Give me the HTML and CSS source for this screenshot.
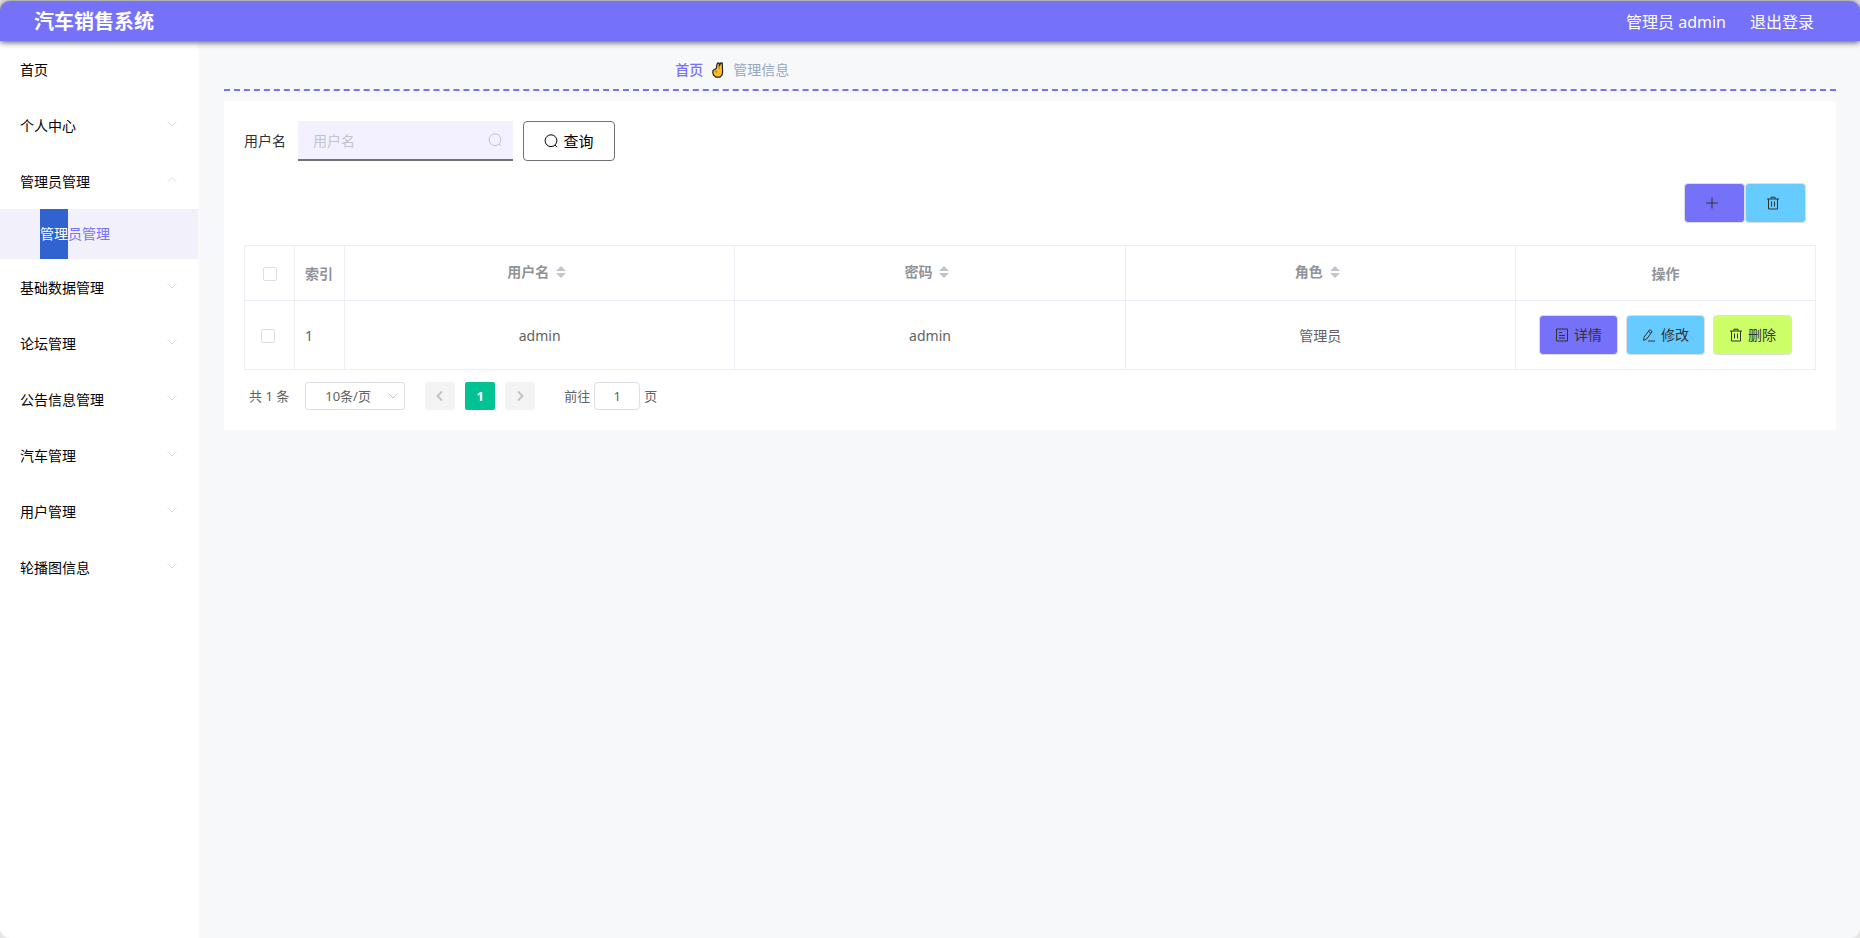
FILE: index.html
```html
<!DOCTYPE html>
<html lang="zh-CN">
<head>
<meta charset="utf-8">
<title>汽车销售系统</title>
<link rel="stylesheet" href="styles.css">
</head>
<body>
<svg class="sprite" aria-hidden="true">
  <symbol id="down" viewBox="0 0 12 12"><path d="M1.5 3.5 6 8l4.500-4.500"/></symbol>
  <symbol id="up" viewBox="0 0 12 12"><path d="M1.500 8 6 3.500 10.500 8"/></symbol>
  <symbol id="search" viewBox="0 0 14 14"><circle cx="7" cy="6.700" r="5.900"/><path d="m11 11 2.200 2.200"/></symbol>
  <symbol id="plus" viewBox="0 0 14 14"><path d="M7 1.500v11M1.500 7h11"/></symbol>
  <symbol id="trash" viewBox="0 0 14 14"><path d="M1 3h12M2.500 3v10h9V3M5 3V1.200h4V3M5.500 5.500v5M8.500 5.500v5"/></symbol>
  <symbol id="doc" viewBox="0 0 14 14"><path d="M1.500 1h11v12h-11zM4 4.500h3M4 7.500h6M4 10h6"/></symbol>
  <symbol id="edit" viewBox="0 0 14 14"><path d="m2 9.300 5.700-7.600 2.500 1.900-5.700 7.600-2.800 1.200zM6.500 3.400 9 5.300M6 13h7"/></symbol>
</svg>
<div class="app">
  <header class="header">
    <h1 class="title">汽车销售系统</h1>
    <div class="account"><span>管理员 admin</span><a class="logout" href="#">退出登录</a></div>
  </header>
  <div class="body">
    <nav class="sidebar">
      <a class="item" href="#">首页</a>
      <button class="item" type="button">个人中心<svg class="arrow"><use href="#down"/></svg></button>
      <button class="item" type="button" aria-expanded="true">管理员管理<svg class="arrow"><use href="#up"/></svg></button>
      <a class="subitem" href="#"><span class="selected">管理</span><span>员管理</span></a>
      <button class="item" type="button">基础数据管理<svg class="arrow"><use href="#down"/></svg></button>
      <button class="item" type="button">论坛管理<svg class="arrow"><use href="#down"/></svg></button>
      <button class="item" type="button">公告信息管理<svg class="arrow"><use href="#down"/></svg></button>
      <button class="item" type="button">汽车管理<svg class="arrow"><use href="#down"/></svg></button>
      <button class="item" type="button">用户管理<svg class="arrow"><use href="#down"/></svg></button>
      <button class="item" type="button">轮播图信息<svg class="arrow"><use href="#down"/></svg></button>
    </nav>
    <main class="main">
      <div class="crumbs">
        <a class="home" href="#">首页</a>
        <svg class="hand" viewBox="0 0 12 16" aria-hidden="true"><path d="M1 8.500 4.300 6.500 5 2.200 6 .8l1.300.6V4L8.800.8l1.500.4.300 9-.6 3-2 2H4L1.500 13 .8 10.500z" fill="#fdbf2d" stroke="#222" stroke-width="1.200" stroke-linejoin="round"/><path d="m2.500 9 2.500.5-1 1.500M7.300 4v3.500" fill="none" stroke="#b86d00" stroke-width=".8"/></svg>
        <span>管理信息</span>
      </div>
      <section class="card">
        <form class="search">
          <label for="username">用户名</label>
          <div class="field"><input id="username" type="text" placeholder="用户名"><svg class="icon"><use href="#search"/></svg></div>
          <button class="query" type="button"><svg class="icon"><use href="#search"/></svg>查询</button>
        </form>
        <div class="tools">
          <button class="btn tool purple" type="button" aria-label="新增"><svg class="icon"><use href="#plus"/></svg></button>
          <button class="btn tool blue" type="button" aria-label="删除"><svg class="icon"><use href="#trash"/></svg></button>
        </div>
        <table class="table">
          <colgroup><col class="narrow"><col class="narrow"><col><col><col><col class="ops"></colgroup>
          <thead>
            <tr>
              <th class="check"><input type="checkbox" aria-label="全选"></th>
              <th class="index">索引</th>
              <th><span class="sortable">用户名<svg class="sort" viewBox="0 0 10 12"><path d="M0 5 5 0l5 5zM0 7h10l-5 5z"/></svg></span></th>
              <th><span class="sortable">密码<svg class="sort" viewBox="0 0 10 12"><path d="M0 5 5 0l5 5zM0 7h10l-5 5z"/></svg></span></th>
              <th><span class="sortable">角色<svg class="sort" viewBox="0 0 10 12"><path d="M0 5 5 0l5 5zM0 7h10l-5 5z"/></svg></span></th>
              <th>操作</th>
            </tr>
          </thead>
          <tbody>
            <tr>
              <td class="check"><input type="checkbox" aria-label="选择 admin"></td>
              <td class="index">1</td>
              <td>admin</td>
              <td>admin</td>
              <td>管理员</td>
              <td class="operate"><div class="actions">
                <button class="btn purple" type="button"><svg class="icon"><use href="#doc"/></svg>详情</button>
                <button class="btn blue" type="button"><svg class="icon"><use href="#edit"/></svg>修改</button>
                <button class="btn green" type="button"><svg class="icon"><use href="#trash"/></svg>删除</button>
              </div></td>
            </tr>
          </tbody>
        </table>
        <div class="pager">
          <span class="total">共 1 条</span>
          <div class="size"><select aria-label="每页条数"><option>10条/页</option></select><svg class="caret"><use href="#down"/></svg></div>
          <div class="pages">
            <button class="page" type="button" aria-label="上一页" disabled><svg class="step" viewBox="0 0 12 12"><path d="M8 1.500 3.500 6 8 10.500"/></svg></button>
            <button class="page current" type="button">1</button>
            <button class="page" type="button" aria-label="下一页" disabled><svg class="step" viewBox="0 0 12 12"><path d="M4 1.500 8.500 6 4 10.500"/></svg></button>
          </div>
          <label class="jump">前往<input type="text" value="1">页</label>
        </div>
      </section>
    </main>
  </div>
</div>
</body>
</html>
```
FILE: styles.css
```css
* { box-sizing: border-box; }
body {
  margin: 0;
  background: #e6e6e6;
  color: #606266;
  font-family: "Noto Sans", "Noto Sans CJK SC", sans-serif;
  font-size: 14px;
  line-height: 20px;
}
button, input, select { font: inherit; color: inherit; margin: 0; }
button { cursor: pointer; }
a { color: inherit; text-decoration: none; }
svg { fill: none; stroke: currentColor; flex: none; }
.sprite { display: none; }
.app {
  display: flex;
  flex-direction: column;
  min-height: 100vh;
  padding-top: 1px;
}
.header {
  position: relative;
  display: flex;
  align-items: center;
  justify-content: space-between;
  height: 40px;
  padding: 1px 46px 0 34px;
  border-radius: 10px 10px 0 0;
  background: #7571f9;
  box-shadow: 0 1px 6px #444;
  color: #fff;
}
.title { margin: 0; font-size: 20px; line-height: 28px; font-weight: 700; }
.account { display: flex; gap: 24px; font-size: 16px; }
.body {
  display: flex;
  flex: 1;
  border-radius: 0 0 10px 10px;
  background: #f7f8fa;
}
.sidebar {
  width: 200px;
  flex: none;
  border-right: 2px solid #fafafa;
  border-radius: 0 0 0 10px;
  background: #fff;
  color: #000;
}
.item {
  display: flex;
  align-items: center;
  justify-content: space-between;
  width: 100%;
  height: 56px;
  padding: 2px 20px 0;
  border: 0;
  background: none;
}
.arrow { width: 12px; height: 12px; margin: 0 0 4px; color: #dcdfe6; }
.subitem {
  display: flex;
  height: 50px;
  padding-left: 40px;
  background: #f2f0fb;
  color: #7571f9;
  line-height: 50px;
}
.selected { background: #3163d0; color: #fff; }
.main { flex: 1; min-width: 0; padding: 0 24px; }
.crumbs {
  display: flex;
  align-items: center;
  gap: 9px;
  height: 50px;
  padding: 10px 0 0 28%;
  border-bottom: 2px dashed #7571f9;
  color: #97a8be;
}
.home { color: #7571f9; font-weight: 500; }
.hand { width: 12px; height: 16px; }
.card { margin-top: 10px; padding: 20px; background: #fff; }
.search { display: flex; align-items: center; color: #303133; }
.field { display: flex; align-items: center; margin: 0 10px 0 12px; width: 215px; height: 40px; padding-right: 11px; background: #f3f1ff; border-bottom: 2px solid #757079; color: #c0c4cc; }
.field input { flex: 1; min-width: 0; height: 100%; padding: 0 15px; border: 0; outline: 0; background: none; color: #606266; }
.field input::placeholder { color: #c0c4cc; opacity: 1; }
.icon { width: 14px; height: 14px; }
.query {
  display: flex;
  align-items: center;
  justify-content: center;
  gap: 5px;
  width: 92px;
  height: 40px;
  padding: 0;
  border: 1px solid #757079;
  border-radius: 4px;
  background: #fff;
  color: #000;
  font-size: 15px;
}
.tools { display: flex; justify-content: flex-end; margin: 22px 10px; }
.btn {
  display: flex;
  align-items: center;
  justify-content: center;
  gap: 5px;
  width: 79px;
  height: 40px;
  padding: 0;
  border: 1px solid #dcdfe6;
  border-radius: 4px;
  color: #333;
}
.tool { width: 61px; padding-right: 6px; }
.purple { background: #7571f9; }
.blue { background: #66ccff; }
.green { background: #ccff66; }
.table { width: 100%; table-layout: fixed; border-collapse: collapse; text-align: center; }
.table th, .table td { padding: 2px 0 0; border: 1px solid #ebeef5; }
.table th { height: 55px; color: #909399; font-weight: 700; }
.table td { height: 69px; }
.table .operate { padding: 0; }
.narrow { width: 50px; }
.ops { width: 300px; }
.table .index { padding-left: 10px; text-align: left; }
.check input {
  display: block;
  appearance: none;
  width: 14px;
  height: 14px;
  margin: 0 16px;
  border: 1px solid #dcdfe6;
  border-radius: 2px;
  background: #fff;
}
th.check input { margin: 0 18px; }
.sortable { display: inline-flex; align-items: center; gap: 7px; padding: 0 6px 4px 0; }
.sort { width: 10px; height: 12px; fill: #c0c4cc; stroke: none; }
.actions { display: flex; justify-content: center; gap: 8px; }
.pager { display: flex; align-items: center; padding: 12px 5px 0; font-size: 13px; }
.size { display: grid; align-items: center; width: 100px; margin: 0 20px 0 16px; }
.size select {
  grid-area: 1 / 1;
  appearance: none;
  height: 28px;
  padding: 0 25px 0 19px;
  border: 1px solid #dcdfe6;
  border-radius: 3px;
  background: #fff;
}
.caret { grid-area: 1 / 1; justify-self: end; width: 12px; height: 12px; margin-right: 6px; color: #c0c4cc; pointer-events: none; }
.pages { display: flex; gap: 10px; }
.page {
  display: flex;
  align-items: center;
  justify-content: center;
  width: 30px;
  height: 28px;
  padding: 0;
  border: 0;
  border-radius: 2px;
  background: #f4f4f5;
  color: #c0c4cc;
}
.current { background: #00c292; color: #fff; font-weight: 700; }
.step { width: 12px; height: 12px; stroke-width: 2; }
.jump { display: flex; align-items: center; gap: 4px; margin-left: 29px; }
.jump input { width: 46px; height: 28px; padding: 0; border: 1px solid #dcdfe6; border-radius: 4px; text-align: center; }
```
